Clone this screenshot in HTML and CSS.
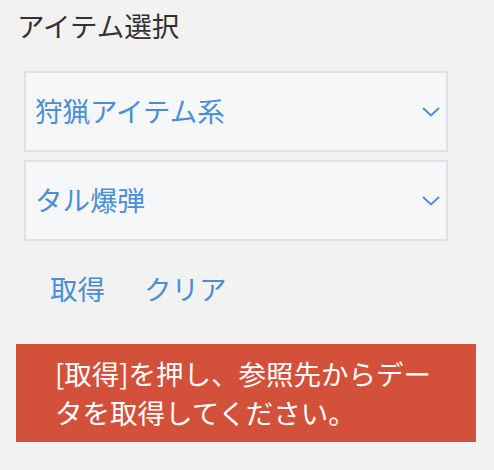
FILE: index.html
```html
<!DOCTYPE html>
<html lang="ja">
<head>
<meta charset="utf-8">
<title>アイテム選択</title>
<link rel="stylesheet" href="styles.css">
</head>
<body>
<div class="page">
  <h1 class="title">アイテム選択</h1>
  <div class="selects">
    <div class="select">
      <span class="select-label">狩猟アイテム系</span>
      <svg class="chevron" width="18" height="10" viewBox="0 0 18 10"><polyline points="1,1 9,8.5 17,1" fill="none" stroke="#4a90d9" stroke-width="2"/></svg>
    </div>
    <div class="select">
      <span class="select-label">タル爆弾</span>
      <svg class="chevron" width="18" height="10" viewBox="0 0 18 10"><polyline points="1,1 9,8.5 17,1" fill="none" stroke="#4a90d9" stroke-width="2"/></svg>
    </div>
  </div>
  <div class="actions">
    <button class="link-btn">取得</button>
    <button class="link-btn">クリア</button>
  </div>
  <div class="alert">[取得]を押し、参照先からデータを取得してください。</div>
</div>
</body>
</html>
```

FILE: styles.css
```css
* { box-sizing: border-box; }
html, body {
  margin: 0;
  background: #f2f2f2;
  font-family: "Noto Sans CJK JP", "Noto Sans", sans-serif;
}
.page {
  padding: 9px 18px 0 16px;
}
.title {
  margin: 0 0 0 1px;
  font-size: 27.5px;
  line-height: 32px;
  font-weight: normal;
  color: #333333;
}
.selects {
  margin: 30px 28px 0 8px;
  display: flex;
  flex-direction: column;
  gap: 8px;
}
.select {
  height: 81px;
  border: 2px solid #dfe1e4;
  background: #f6f7f9;
  display: flex;
  align-items: center;
  justify-content: space-between;
  padding: 0 6px 0 9px;
}
.select-label {
  font-size: 27.5px;
  line-height: 32px;
  color: #4a8ed8;
  margin-bottom: 3px;
}
.chevron { display: block; }
.actions {
  margin: 31px 0 0 34px;
  display: flex;
  gap: 39px;
}
.link-btn {
  border: 0;
  background: none;
  padding: 0;
  font-family: inherit;
  font-size: 27.5px;
  line-height: 32px;
  color: #4a8ed8;
}
.alert {
  margin-top: 40px;
  background: #d3513a;
  color: #ffffff;
  font-size: 27.5px;
  line-height: 39px;
  padding: 10px 38px 10px 39px;
}
```
